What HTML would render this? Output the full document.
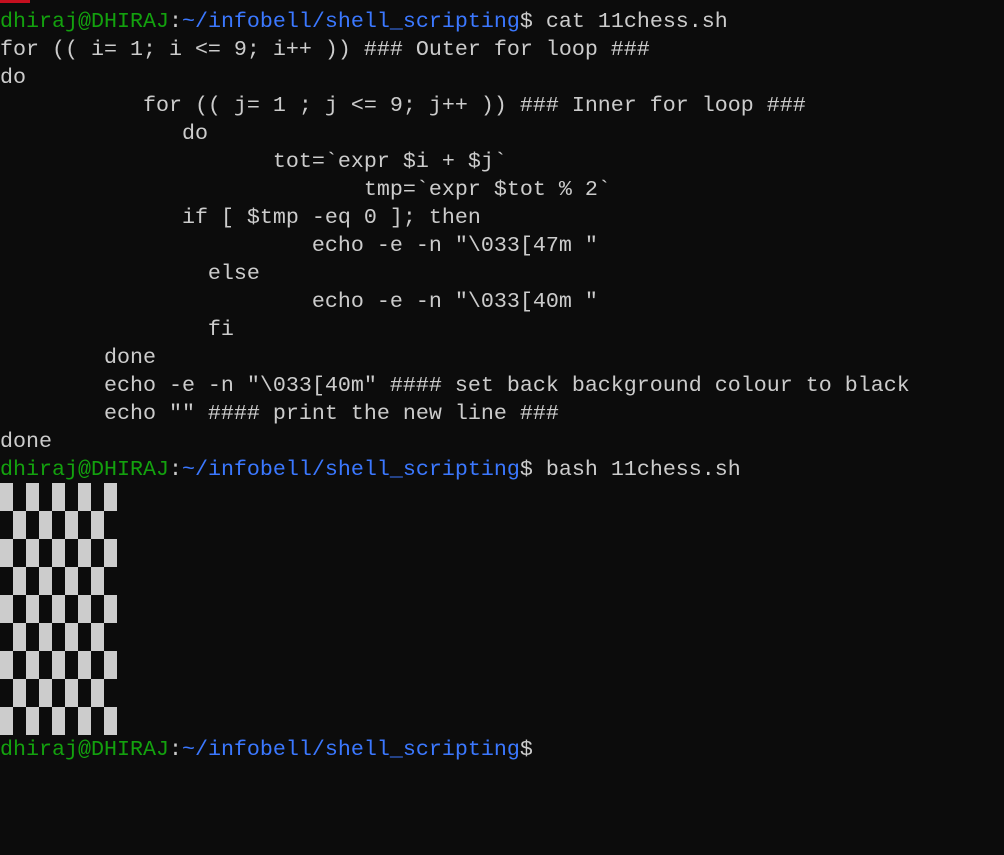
<!DOCTYPE html>
<html><head><style>
html,body{margin:0;padding:0;background:#0c0c0c;width:1004px;height:855px;overflow:hidden}
pre{margin:0;position:absolute;left:0;top:8px;font-family:"Liberation Mono",monospace;font-size:21.67px;line-height:28px;color:#cccccc}
.g{color:#13a10e}.b{color:#3b78ff}
.bar{position:absolute;left:0;top:0;width:30px;height:3px;background:#c50f1f}
.board{position:absolute;left:0;top:483px}
.c{position:absolute;width:13px;height:28px;background:#cccccc}
</style></head><body>
<div class="bar"></div>
<pre><span class="g">dhiraj@DHIRAJ</span>:<span class="b">~/infobell/shell_scripting</span>$ cat 11chess.sh
for (( i= 1; i &lt;= 9; i++ )) ### Outer for loop ###
do
           for (( j= 1 ; j &lt;= 9; j++ )) ### Inner for loop ###
              do
                     tot=`expr $i + $j`
                            tmp=`expr $tot % 2`
              if [ $tmp -eq 0 ]; then
                        echo -e -n "\033[47m "
                else
                        echo -e -n "\033[40m "
                fi
        done
        echo -e -n "\033[40m" #### set back background colour to black
        echo "" #### print the new line ###
done
<span class="g">dhiraj@DHIRAJ</span>:<span class="b">~/infobell/shell_scripting</span>$ bash 11chess.sh
 








<span class="g">dhiraj@DHIRAJ</span>:<span class="b">~/infobell/shell_scripting</span>$</pre>
<div class="board" id="bd"></div>
<script>
var bd=document.getElementById('bd'),h='';
for(var r=0;r<9;r++)for(var c=0;c<9;c++)if((r+c)%2==0)h+='<div class="c" style="left:'+(c*13)+'px;top:'+(r*28)+'px"></div>';
bd.innerHTML=h;
</script>
</body></html>
